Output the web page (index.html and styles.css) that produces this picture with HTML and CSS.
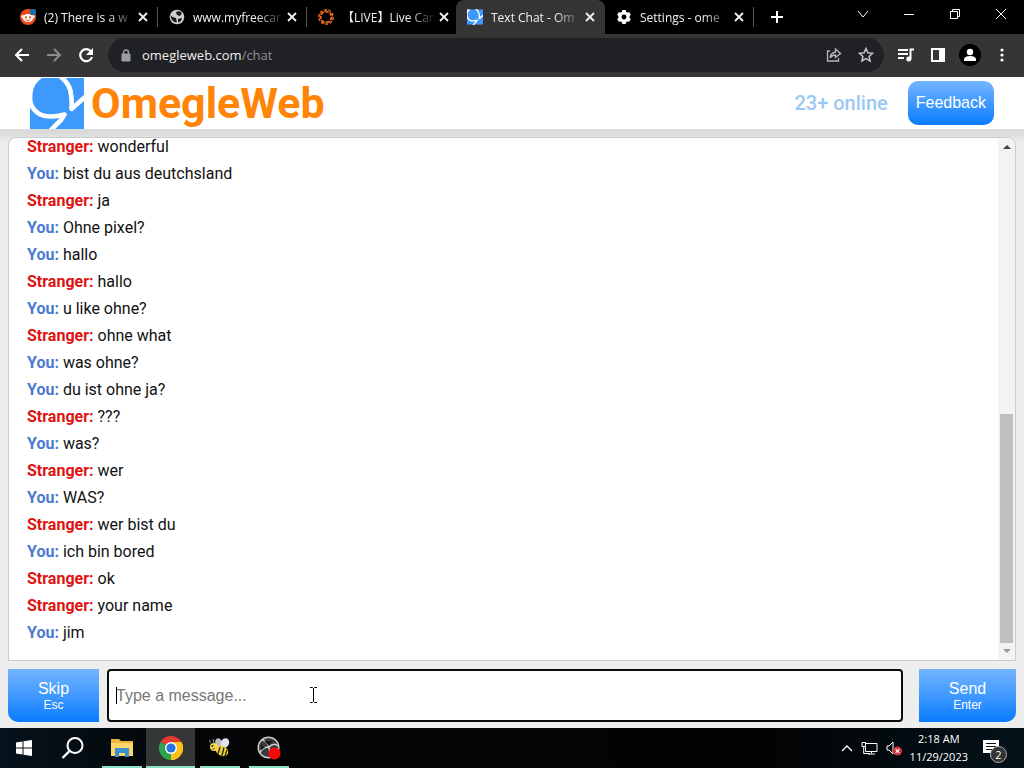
FILE: index.html
```html
<!DOCTYPE html>
<html lang="en">
<head>
<meta charset="utf-8">
<title>Text Chat - OmegleWeb</title>
<link rel="stylesheet" href="styles.css">
</head>
<body>
<svg class="defs" width="0" height="0" aria-hidden="true">
  <symbol id="x" viewBox="0 0 12 12"><path d="M2 2l8 8M10 2l-8 8" stroke="currentColor" stroke-width="1.8" fill="none"/></symbol>
  <symbol id="omegle" viewBox="0 0 54 51">
    <path d="M0 0h54v51H0z" fill="#3d9afc"/>
    <path d="M0 0h12Q3 6 2.500 16T4 28L0 30z" fill="#fff"/>
    <path d="M30 -2Q40 6 41 16Q42 23 41.500 31L56 18M0 24Q4 35 13 37.500T34.500 36.500L31 42L20 53" fill="none" stroke="#fff" stroke-width="4.6" stroke-linejoin="round"/>
  </symbol>
</svg>
<div class="tabs">
  <div class="tab">
    <svg class="favicon" viewBox="0 0 16 16"><circle cx="8" cy="8" r="8" fill="#f04a18"/><circle cx="2.8" cy="7.5" r="1.5" fill="#fff"/><circle cx="13.2" cy="7.5" r="1.5" fill="#fff"/><ellipse cx="8" cy="9" rx="5.3" ry="4" fill="#fff"/><circle cx="6" cy="8.4" r="1.1" fill="#f04a18"/><circle cx="10" cy="8.4" r="1.1" fill="#f04a18"/><path d="M5.7 10.8q2.3 1.6 4.6 0" stroke="#f04a18" fill="none"/><circle cx="13" cy="3" r="3.2" fill="#1769aa"/></svg>
    <span class="tab-title">(2) There is a w</span>
    <button class="tab-close" aria-label="Close tab"><svg><use href="#x"/></svg></button>
  </div>
  <div class="tab">
    <svg class="favicon" viewBox="0 0 16 16"><circle cx="8" cy="8" r="7.3" fill="#c9cbce"/><path d="M1.500 6q2 3 4.500 2.500 2 1 1.500 5Q2 13 1.500 6zM7 3q4-2 6 1l-2 3-3-1z" fill="#17181a"/><path d="M9 10l4-1-1 3-3 1.500z" fill="#17181a"/></svg>
    <span class="tab-title">www.myfreecar</span>
    <button class="tab-close" aria-label="Close tab"><svg><use href="#x"/></svg></button>
  </div>
  <div class="tab no-line">
    <svg class="favicon" viewBox="0 0 16 16" fill="none"><circle cx="8" cy="8" r="5.500" stroke="#ed6a1c" stroke-width="2"/><circle cx="8" cy="8" r="7.200" stroke="#ed6a1c" stroke-width="1.400" stroke-dasharray="3 1.500"/><path d="M5 1l2 3M11 2v3M14 7l-3 1M13 12l-3-1M7 14l1-3M2 11l3-1M2 6l3 1" stroke="#000"/></svg>
    <span class="tab-title">【LIVE】Live Can</span>
    <button class="tab-close" aria-label="Close tab"><svg><use href="#x"/></svg></button>
  </div>
  <div class="tab active">
    <svg class="favicon"><use href="#omegle"/></svg>
    <span class="tab-title">Text Chat - Om</span>
    <button class="tab-close" aria-label="Close tab"><svg><use href="#x"/></svg></button>
  </div>
  <div class="tab">
    <svg class="favicon" viewBox="0 0 16 16"><circle cx="8" cy="8" r="4" stroke="#fff" stroke-width="3.4" fill="none"/><path d="M8 1v3M8 12v3M2 4.500l2.600 1.500M11.400 10l2.600 1.500M2 11.500L4.600 10M11.400 6L14 4.500" stroke="#fff" stroke-width="3.600"/><circle cx="8" cy="8" r="2.400" fill="#000"/></svg>
    <span class="tab-title">Settings - ome</span>
    <button class="tab-close" aria-label="Close tab"><svg><use href="#x"/></svg></button>
  </div>
  <button class="new-tab" aria-label="New tab"><svg width="12" height="12" viewBox="0 0 12 12"><path d="M6 0v12M0 6h12" stroke="#fff" stroke-width="2"/></svg></button>
  <div class="window-buttons">
    <button aria-label="Search tabs"><svg width="12" height="12" viewBox="0 0 12 12"><path d="M1 3l5 6 5-6"/></svg></button>
    <button aria-label="Minimize"><svg width="12" height="12" viewBox="0 0 12 12"><path d="M1 6.500h10"/></svg></button>
    <button aria-label="Restore"><svg width="12" height="12" viewBox="0 0 12 12"><path d="M1.500 3.500h7v7h-7zM3.500 3.500v-2h7v7h-2"/></svg></button>
    <button aria-label="Close window"><svg width="12" height="12" viewBox="0 0 12 12"><path d="M1 1l10 10M11 1L1 11"/></svg></button>
  </div>
</div>
<div class="toolbar">
  <button aria-label="Back"><svg width="16" height="16" viewBox="0 0 16 16"><path d="M15 8H2M8 2L2 8l6 6" stroke="#fff" stroke-width="2" fill="none"/></svg></button>
  <button aria-label="Forward"><svg width="16" height="16" viewBox="0 0 16 16"><path d="M1 8h13M8 2l6 6-6 6" stroke="#8a8b8d" stroke-width="2" fill="none"/></svg></button>
  <button aria-label="Reload"><svg width="16" height="16" viewBox="0 0 16 16"><path d="M13 4.500A6 6 0 1 0 14 10" stroke="#fff" stroke-width="2.200" fill="none"/><path d="M15 1v7H8z" fill="#fff"/></svg></button>
  <div class="address">
    <svg width="10" height="13" viewBox="0 0 10 13"><path d="M1 5h8v7H1z" fill="#9b9ea2" stroke="#9b9ea2" stroke-linejoin="round"/><path d="M2.500 5V3.500a2.500 2.500 0 0 1 5 0V5" fill="none" stroke="#9b9ea2" stroke-width="1.400"/></svg>
    <a class="url" href="#">omegleweb.com<span>/chat</span></a>
    <button aria-label="Share"><svg width="16" height="16" viewBox="0 0 16 16" fill="none" stroke="#b5b7ba" stroke-width="1.300"><path d="M4 4H1.500v10h11v-3M9.500 5V2l5 4.500-5 4V8Q6 8 4 11q.5-5 5.500-6z"/></svg></button>
    <button aria-label="Bookmark"><svg width="16" height="16" viewBox="0 0 16 16"><path d="M8 1.500l1.900 4.300 4.700.5-3.500 3.100 1 4.600L8 11.600 3.900 14l1-4.600-3.500-3.100 4.700-.5z" fill="none" stroke="#c4c6c8" stroke-width="1.500"/></svg></button>
  </div>
  <div class="tools">
    <button aria-label="Media"><svg width="18" height="16" viewBox="0 0 18 16"><path d="M1 3h10M1 7h10M1 11h6M13.500 12V2.500H17" stroke="#fff" stroke-width="2" fill="none"/><circle cx="11.800" cy="12" r="2.500" fill="#fff"/></svg></button>
    <button aria-label="Side panel"><svg width="14" height="14" viewBox="0 0 14 14"><path d="M0 0h14v14H0zM2 2v10h6V2z" fill="#fff" fill-rule="evenodd"/></svg></button>
    <button aria-label="Profile"><svg width="22" height="22" viewBox="0 0 22 22"><circle cx="11" cy="11" r="11"/><circle cx="11" cy="8" r="3.200" fill="#fff"/><path d="M5 17v-1.500q0-3.500 6-3.500t6 3.500V17z" fill="#fff"/></svg></button>
    <button aria-label="Menu"><svg width="4" height="14" viewBox="0 0 4 14" fill="#fff"><circle cx="2" cy="2" r="1.600"/><circle cx="2" cy="7" r="1.600"/><circle cx="2" cy="12" r="1.600"/></svg></button>
  </div>
</div>
<header class="site-header">
  <svg class="logo"><use href="#omegle"/></svg>
  <h1>OmegleWeb</h1>
  <span class="online">23+ online</span>
  <button class="feedback">Feedback</button>
</header>
<main>
  <section class="chat">
    <div class="log">
      <p><b class="stranger">Stranger:</b> wonderful</p>
      <p><b>You:</b> bist du aus deutchsland</p>
      <p><b class="stranger">Stranger:</b> ja</p>
      <p><b>You:</b> Ohne pixel?</p>
      <p><b>You:</b> hallo</p>
      <p><b class="stranger">Stranger:</b> hallo</p>
      <p><b>You:</b> u like ohne?</p>
      <p><b class="stranger">Stranger:</b> ohne what</p>
      <p><b>You:</b> was ohne?</p>
      <p><b>You:</b> du ist ohne ja?</p>
      <p><b class="stranger">Stranger:</b> ???</p>
      <p><b>You:</b> was?</p>
      <p><b class="stranger">Stranger:</b> wer</p>
      <p><b>You:</b> WAS?</p>
      <p><b class="stranger">Stranger:</b> wer bist du</p>
      <p><b>You:</b> ich bin bored</p>
      <p><b class="stranger">Stranger:</b> ok</p>
      <p><b class="stranger">Stranger:</b> your name</p>
      <p><b>You:</b> jim</p>
    </div>
    <div class="scrollbar" aria-hidden="true">
      <svg width="8" height="4" viewBox="0 0 8 4"><path d="M0 4l4-4 4 4z" fill="#444"/></svg>
      <div class="track"><div class="thumb"></div></div>
      <svg width="8" height="4" viewBox="0 0 8 4"><path d="M0 0l4 4 4-4z" fill="#999"/></svg>
    </div>
  </section>
  <form class="composer">
    <button type="button" class="skip">Skip<small>Esc</small></button>
    <div class="field">
      <input type="text" placeholder="Type a message..." aria-label="Message">
      <span class="caret"></span>
      <svg class="pointer" width="7" height="16" viewBox="0 0 7 16"><path d="M0 .5h2.500l1 1 1-1H7M3.500 1v14M0 15.500h2.500l1-1 1 1H7" stroke="#000" fill="none"/></svg>
    </div>
    <button type="button" class="send">Send<small>Enter</small></button>
  </form>
</main>
<footer class="taskbar">
  <button class="start" aria-label="Start"><svg width="18" height="18" viewBox="0 0 18 18"><path d="M1 3.500l6.500-1v6H1zM8.500 2.300L17 1v7.500H8.500zM1 9.500h6.500v6l-6.500-1zM8.500 9.500H17V17l-8.500-1.300z" fill="#fff"/></svg></button>
  <button aria-label="Search"><svg width="24" height="24" viewBox="0 0 24 24"><circle cx="14" cy="9.500" r="7.500" fill="none" stroke="#fff" stroke-width="2"/><path d="M8.500 15l-7 7" stroke="#fff" stroke-width="2.400"/></svg></button>
  <button class="running" aria-label="File Explorer"><svg width="22" height="20" viewBox="0 0 22 20"><path d="M0 1h8l2 2h12v15H0z" fill="#e9b43c"/><path d="M0 5h22v13H0z" fill="#ffd566"/><path d="M4 19v-9h14v9h-4v-4H8v4z" fill="#3c8fd0"/></svg></button>
  <button class="running current" aria-label="Chrome"><svg width="24" height="24" viewBox="0 0 24 24"><path d="M12 12L1.600 6a12 12 0 0 1 20.800 0z" fill="#e33b2e"/><path d="M12 12L22.400 6A12 12 0 0 1 12 24z" fill="#fbc116"/><path d="M12 12v12A12 12 0 0 1 1.600 6z" fill="#2da44e"/><path d="M12 6h10.400a12 12 0 0 1-10.400 18l5.200-9z" fill="#fbc116"/><circle cx="12" cy="12" r="6" fill="#fff"/><circle cx="12" cy="12" r="4.600" fill="#2475e0"/></svg></button>
  <button class="running" aria-label="Bee"><svg width="22" height="20" viewBox="0 0 22 20"><ellipse cx="10" cy="5" rx="3.500" ry="5" fill="#b9bec4" transform="rotate(-25 10 5)"/><ellipse cx="16" cy="5" rx="4" ry="5" fill="#dfe2e6" transform="rotate(25 16 5)"/><ellipse cx="13" cy="13" rx="6.500" ry="4.800" fill="#ecd33c" transform="rotate(25 13 13)"/><path d="M11 9l-2 7M15 9.500l-2 8M18 12l-2 6" stroke="#292612" stroke-width="1.300"/><circle cx="5" cy="9" r="4" fill="#f2dc4b"/><circle cx="3.500" cy="8" r="1" fill="#222"/><path d="M2 5L0 2M5 5L4 1" stroke="#aaa"/><path d="M3 11q2 1 3-1" stroke="#a33" fill="none"/></svg></button>
  <button class="running" aria-label="OBS Studio"><svg width="24" height="24" viewBox="0 0 24 24"><circle cx="11.500" cy="11.500" r="10.300" fill="#3a3a3d" stroke="#c9c9c9" stroke-width="1.500"/><path d="M5 4q5 1 7 7Q5 11 3 17M12 11q5-5 9-1M12 11l1 7" stroke="#d0d0d0" stroke-width="1.400" fill="none"/><path d="M7 4.500q5 1 8.500 0L12 10zM4 8q1 3 4 3.500L4 14z" fill="#17171a"/><circle cx="17.500" cy="17.500" r="6" fill="#f80808"/></svg></button>
  <div class="tray">
    <svg width="12" height="8" viewBox="0 0 12 8"><path d="M1 7l5-5 5 5" stroke="#fff" stroke-width="1.300" fill="none"/></svg>
    <svg width="17" height="14" viewBox="0 0 17 14"><path d="M5 2.500h11v8H4.500V6M1 1.500h3.500v4H1zM2.700 5.500v7H9M10.500 10.500v2M7 13h7" stroke="#fff" fill="none"/></svg>
    <svg width="16" height="15" viewBox="0 0 16 15"><path d="M1 5h2l4-4v12L3 9H1z" fill="none" stroke="#fff"/><circle cx="11.500" cy="10" r="4.500" fill="#d62f3c"/><path d="M9.700 8.200l3.600 3.600M13.300 8.200l-3.600 3.600" stroke="#fff" stroke-width="1.200"/></svg>
    <time datetime="2023-11-29T02:18">2:18 AM<br>11/29/2023</time>
    <div class="notices">
      <svg width="16" height="17" viewBox="0 0 16 17"><path d="M0 0h16v13h-6l-3 4v-4H0z" fill="#fff"/><path d="M3 3.500h10M3 6.500h10M3 9.500h7" stroke="#111"/></svg>
      <span>2</span>
    </div>
  </div>
</footer>
</body>
</html>
```

FILE: styles.css
```css
* { box-sizing: border-box; }
body {
  margin: 0;
  height: 100vh;
  display: flex;
  flex-direction: column;
  overflow: hidden;
  background: #eee;
  font-family: Roboto, sans-serif;
}
button {
  border: 0;
  padding: 0;
  background: none;
  color: inherit;
  display: flex;
  align-items: center;
  justify-content: center;
}
svg { flex: none; }
.defs { position: absolute; }

/* Browser frame */
.tabs {
  display: flex;
  flex: none;
  height: 34px;
  padding-left: 9px;
  background: #000;
  color: #f1f1f1;
  font: 12px "Open Sans", "Noto Sans CJK JP", sans-serif;
}
.tab {
  display: flex;
  align-items: center;
  width: 149px;
  padding: 0 9px 0 11px;
  background: linear-gradient(#555, #555) right / 1px 20px no-repeat;
}
.tab.no-line { background: none; }
.tab.active {
  background: #353535;
  border-radius: 8px 8px 0 0;
}
.favicon { width: 16px; height: 16px; }
.tab-title {
  flex: 1;
  margin: 0 2px 0 8px;
  white-space: nowrap;
  -webkit-mask-image: linear-gradient(90deg, #000 70%, transparent);
  mask-image: linear-gradient(90deg, #000 70%, transparent);
}
.tab-close svg { width: 12px; height: 12px; }
.new-tab { width: 46px; }
.window-buttons {
  display: flex;
  margin-left: auto;
  padding-bottom: 6px;
}
.window-buttons button { width: 46px; }
.window-buttons svg { fill: none; stroke: #fff; }

.toolbar {
  display: flex;
  flex: none;
  align-items: center;
  height: 43px;
  padding: 0 6px 1px;
  background: #353535;
}
.toolbar > button { width: 32px; }
.address {
  display: flex;
  flex: 1;
  align-items: center;
  gap: 16px;
  height: 34px;
  margin-left: 6px;
  padding: 0 10px 0 13px;
  border-radius: 17px;
  background: #202124;
}
.url {
  flex: 1;
  margin-left: -5px;
  color: #eee;
  font: 13px "Open Sans", sans-serif;
  text-decoration: none;
}
.url span { color: #8d9094; }
.tools { display: flex; padding-left: 6px; }
.tools button { width: 32px; }

/* Site */
.site-header {
  display: flex;
  flex: none;
  align-items: center;
  height: 52px;
  padding: 0 30px;
  background: #fff;
  box-shadow: 0 0 8px 8px #d8d8d8;
  clip-path: inset(0 0 -20px 0);
}
.logo { width: 54px; height: 51px; }
h1 {
  margin: 0 auto 0 7px;
  color: #ff8408;
  font: bold 43px/52px Roboto, sans-serif;
}
.online {
  margin-right: 20px;
  color: #9bc8f3;
  font-size: 20px;
  font-weight: 500;
}
.feedback, .skip, .send {
  background: linear-gradient(#74b5ff, #0a7cff);
  color: #fff;
  font: 16px "Liberation Sans", Arial, sans-serif;
}
.feedback {
  height: 44px;
  padding: 0 8px;
  border-radius: 10px;
}
main {
  display: flex;
  flex: 1;
  flex-direction: column;
  gap: 8px;
  min-height: 0;
  padding: 8px 8px 6px;
}
.chat {
  display: flex;
  flex: 1;
  min-height: 0;
  overflow: hidden;
  border: 1px solid #ccc;
  border-radius: 8px 8px 0 0;
  background: #fff;
  z-index: 1;
}
.log {
  display: flex;
  flex: 1;
  flex-direction: column;
  justify-content: flex-end;
  padding: 0 18px 14px;
  color: #111;
  font-size: 16px;
  line-height: 27px;
}
.log p { margin: 0; }
.log b { color: #4a7bd0; font-weight: 700; }
.log .stranger { color: #e01212; }
.scrollbar {
  display: flex;
  flex-direction: column;
  align-items: center;
  gap: 6px;
  width: 17px;
  padding: 7px 0;
  background: #f3f3f3;
}
.track {
  display: flex;
  flex: 1;
  flex-direction: column;
  justify-content: flex-end;
  width: 13px;
}
.thumb { height: 47%; background: #bfbfbf; }

.composer { display: flex; flex: none; height: 53px; }
.skip, .send { flex-direction: column; }
.skip { width: 91px; border-radius: 0 0 0 10px; }
.send { width: 97px; border-radius: 0 0 10px 0; }
small { font-size: 12px; line-height: 14px; }
.field {
  position: relative;
  flex: 1;
  margin: 0 16px 0 8px;
}
.field input {
  width: 100%;
  height: 100%;
  padding: 0 7px;
  border: 2px solid #0b0b0b;
  border-radius: 4px;
  background: #fff;
  font: 16px "Liberation Sans", Arial, sans-serif;
}
.field input::placeholder { color: #777; }
.caret {
  position: absolute;
  top: 18px;
  left: 9px;
  width: 1px;
  height: 17px;
  background: #000;
}
.pointer { position: absolute; top: 18px; left: 203px; }

/* Taskbar */
.taskbar {
  display: flex;
  flex: none;
  height: 40px;
  background: linear-gradient(90deg, #06121c, #030506 20%, #020304 75%, #04121a);
  color: #fff;
}
.taskbar > button { width: 49px; }
.taskbar > .start { width: 48px; }
.taskbar .running {
  background: linear-gradient(#8be0c6, #8be0c6) bottom / 40px 2px no-repeat;
}
.taskbar .current {
  background: linear-gradient(#8be0c6, #8be0c6) bottom / 100% 2px no-repeat #343638;
}
.tray {
  display: flex;
  align-items: center;
  gap: 8px;
  margin-left: auto;
  padding-right: 16px;
}
.tray time {
  font: 11px/18px "Open Sans", sans-serif;
  text-align: center;
}
.notices { position: relative; margin: 0 9px 0 7px; }
.notices svg { display: block; }
.notices span {
  position: absolute;
  top: 6px;
  left: 7px;
  width: 17px;
  height: 17px;
  border: 1px solid #aaa;
  border-radius: 50%;
  background: #333;
  font: 11px/15px "Open Sans", sans-serif;
  text-align: center;
}
```
